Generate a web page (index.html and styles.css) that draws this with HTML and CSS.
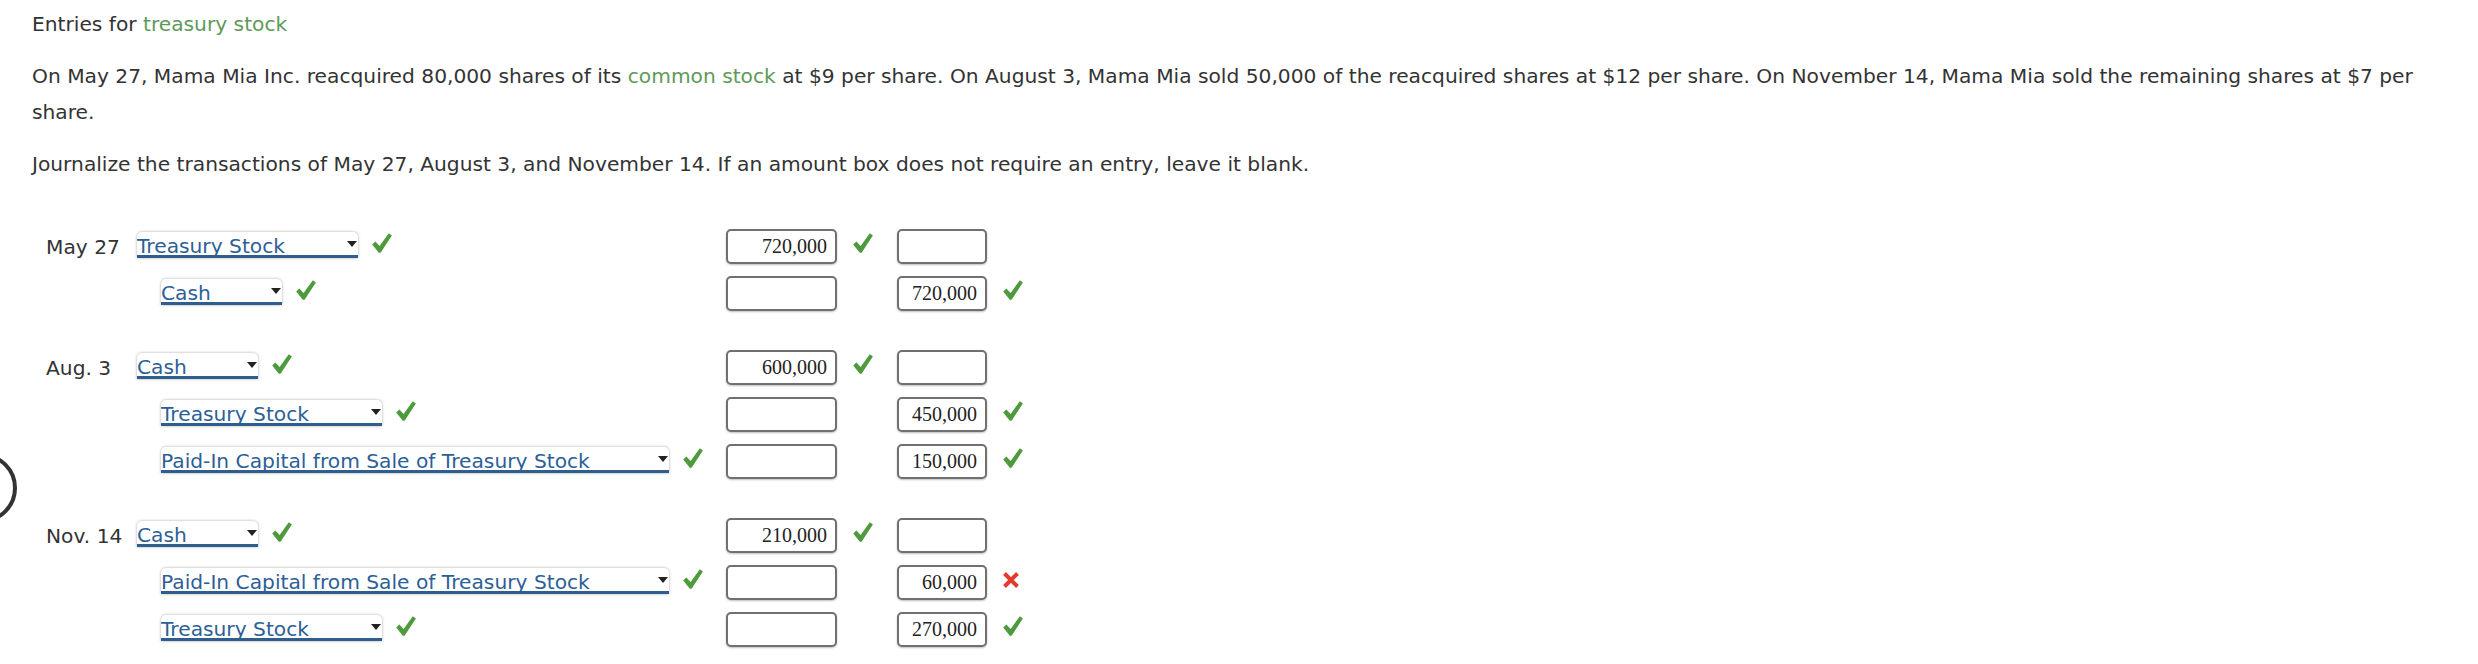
FILE: index.html
```html
<!DOCTYPE html>
<html lang="en">
<head>
<meta charset="utf-8">
<title>Entries for treasury stock</title>
<link rel="stylesheet" href="styles.css">
</head>
<body>
<svg class="defs" width="0" height="0" aria-hidden="true">
  <symbol id="chk" viewBox="0 0 20 20">
    <path d="M0.2 11.4 L3.4 8.5 L7.6 13 L16.8 0.2 L19.9 2.4 L8.6 19.8 L6.8 19.8 Z"/>
  </symbol>
  <symbol id="cross" viewBox="0 0 16 16">
    <path d="M1.5 1.5 L14.5 14.5 M14.5 1.5 L1.5 14.5"/>
  </symbol>
</svg>
<div class="page">
  <div class="ring"></div>
  <p class="title">Entries for <span class="term">treasury stock</span></p>
  <p class="para">On May 27, Mama Mia Inc. reacquired 80,000 shares of its <span class="term">common stock</span> at $9 per share. On August 3, Mama Mia sold 50,000 of the reacquired shares at $12 per share. On November 14, Mama Mia sold the remaining shares at $7 per share.</p>
  <p class="para">Journalize the transactions of May 27, August 3, and November 14. If an amount box does not require an entry, leave it blank.</p>

  <div class="journal">
    <div class="entry">
      <div class="row">
        <div class="date">May 27</div>
        <div class="acct">
          <div class="sel w-ts"><span class="sel-text">Treasury Stock</span><span class="caret"></span></div>
          <svg class="ok"><use href="#chk"/></svg>
        </div>
        <div class="amt dr">720,000</div>
        <div class="mark"><svg class="ok"><use href="#chk"/></svg></div>
        <div class="amt cr"></div>
        <div class="mark"></div>
      </div>
      <div class="row">
        <div class="date"></div>
        <div class="acct credit">
          <div class="sel w-cash"><span class="sel-text">Cash</span><span class="caret"></span></div>
          <svg class="ok"><use href="#chk"/></svg>
        </div>
        <div class="amt dr"></div>
        <div class="mark"></div>
        <div class="amt cr">720,000</div>
        <div class="mark"><svg class="ok"><use href="#chk"/></svg></div>
      </div>
    </div>

    <div class="entry">
      <div class="row">
        <div class="date">Aug. 3</div>
        <div class="acct">
          <div class="sel w-cash"><span class="sel-text">Cash</span><span class="caret"></span></div>
          <svg class="ok"><use href="#chk"/></svg>
        </div>
        <div class="amt dr">600,000</div>
        <div class="mark"><svg class="ok"><use href="#chk"/></svg></div>
        <div class="amt cr"></div>
        <div class="mark"></div>
      </div>
      <div class="row">
        <div class="date"></div>
        <div class="acct credit">
          <div class="sel w-ts"><span class="sel-text">Treasury Stock</span><span class="caret"></span></div>
          <svg class="ok"><use href="#chk"/></svg>
        </div>
        <div class="amt dr"></div>
        <div class="mark"></div>
        <div class="amt cr">450,000</div>
        <div class="mark"><svg class="ok"><use href="#chk"/></svg></div>
      </div>
      <div class="row">
        <div class="date"></div>
        <div class="acct credit">
          <div class="sel w-pic"><span class="sel-text">Paid-In Capital from Sale of Treasury Stock</span><span class="caret"></span></div>
          <svg class="ok"><use href="#chk"/></svg>
        </div>
        <div class="amt dr"></div>
        <div class="mark"></div>
        <div class="amt cr">150,000</div>
        <div class="mark"><svg class="ok"><use href="#chk"/></svg></div>
      </div>
    </div>

    <div class="entry">
      <div class="row">
        <div class="date">Nov. 14</div>
        <div class="acct">
          <div class="sel w-cash"><span class="sel-text">Cash</span><span class="caret"></span></div>
          <svg class="ok"><use href="#chk"/></svg>
        </div>
        <div class="amt dr">210,000</div>
        <div class="mark"><svg class="ok"><use href="#chk"/></svg></div>
        <div class="amt cr"></div>
        <div class="mark"></div>
      </div>
      <div class="row">
        <div class="date"></div>
        <div class="acct credit">
          <div class="sel w-pic"><span class="sel-text">Paid-In Capital from Sale of Treasury Stock</span><span class="caret"></span></div>
          <svg class="ok"><use href="#chk"/></svg>
        </div>
        <div class="amt dr"></div>
        <div class="mark"></div>
        <div class="amt cr">60,000</div>
        <div class="mark"><svg class="bad"><use href="#cross"/></svg></div>
      </div>
      <div class="row">
        <div class="date"></div>
        <div class="acct credit">
          <div class="sel w-ts"><span class="sel-text">Treasury Stock</span><span class="caret"></span></div>
          <svg class="ok"><use href="#chk"/></svg>
        </div>
        <div class="amt dr"></div>
        <div class="mark"></div>
        <div class="amt cr">270,000</div>
        <div class="mark"><svg class="ok"><use href="#chk"/></svg></div>
      </div>
    </div>
  </div>
</div>
</body>
</html>
```

FILE: styles.css
```css
* { box-sizing: border-box; }

html, body {
  margin: 0;
  padding: 0;
  background: #ffffff;
}

body {
  font-family: "DejaVu Sans", Verdana, sans-serif;
  font-size: 20.22px;
  color: #333333;
  overflow: hidden;
}

.defs { position: absolute; width: 0; height: 0; }

.page {
  position: relative;
  padding: 6px 32px 0 32px;
}

.ring {
  position: absolute;
  left: -53px;
  top: 453px;
  width: 70px;
  height: 70px;
  border: 4px solid #333333;
  border-radius: 50%;
}

p { margin: 0; line-height: 36px; }
.title { margin-bottom: 16px; }
.para { margin-bottom: 16px; }

.term { color: #5e9a58; }

.journal {
  margin-top: 41px;
  margin-left: 14px;
  display: flex;
  flex-direction: column;
  gap: 27px;
}

.entry { display: flex; flex-direction: column; }

.row {
  display: grid;
  grid-template-columns: 91px 589px 111px 60px 90px 40px;
  align-items: center;
  height: 47px;
}

.date { white-space: nowrap; }

.acct {
  display: flex;
  align-items: center;
  gap: 14px;
}
.acct.credit { padding-left: 24px; }

.sel {
  display: flex;
  justify-content: space-between;
  align-items: flex-start;
  height: 26px;
  margin-bottom: 3px;
  background: #ffffff;
  border-bottom: 3px solid #2f5e8e;
  border-radius: 5px 5px 0 0;
  box-shadow: 0 0 3px rgba(0, 0, 0, 0.35);
  overflow: hidden;
  color: #2d5f97;
}
.sel-text {
  line-height: 28px;
  white-space: nowrap;
}
.caret {
  flex: none;
  width: 0;
  height: 0;
  margin: 9px 1px 0 0;
  border-left: 5px solid transparent;
  border-right: 5px solid transparent;
  border-top: 6px solid #222222;
}
.w-ts { width: 221px; }
.w-cash { width: 121px; }
.w-pic { width: 508px; }

.ok {
  width: 20px;
  height: 20px;
  fill: #4e9b3e;
  flex: none;
  margin-bottom: 8px;
}

.bad {
  width: 16px;
  height: 16px;
  stroke: #e63a2c;
  stroke-width: 4;
  fill: none;
  margin-bottom: 5px;
}

.amt {
  height: 35px;
  border: 2px solid #707070;
  border-radius: 5px;
  box-shadow: 0 1px 2px rgba(0, 0, 0, 0.25);
  background: #ffffff;
  font-family: "Liberation Serif", "Times New Roman", serif;
  font-size: 20px;
  color: #222222;
  text-align: right;
  padding-right: 8px;
  line-height: 31px;
}

.mark {
  display: flex;
  align-items: center;
  padding-left: 16px;
}
```
